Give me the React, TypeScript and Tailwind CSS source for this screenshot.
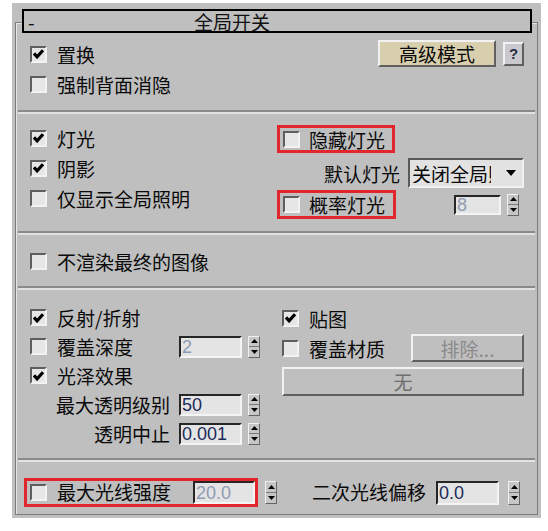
function Check({ checked }: { checked?: boolean }) {
  return (
    <span className="flex h-[17px] w-[17px] shrink-0 items-center justify-center border-2 border-t-[#5e5e5e] border-l-[#5e5e5e] border-b-[#f2f2f2] border-r-[#f2f2f2] bg-[#e6e6e6]">
      {checked && (
        <svg width="11" height="10" viewBox="0 0 11 10">
          <path d="M1 4.4 L4.1 7.8 L10 1.2" fill="none" stroke="#000" strokeWidth="3.2" />
        </svg>
      )}
    </span>
  );
}

function Spinner({ h = "h-[22px]" }: { h?: string }) {
  return (
    <span className={`flex ${h} w-[12px] shrink-0 flex-col border border-t-[#f0f0f0] border-l-[#f0f0f0] border-b-[#666] border-r-[#666] bg-[#c6c6c6]`}>
      <span className="flex flex-1 items-center justify-center border-b border-b-[#7a7a7a]">
        <svg width="7" height="4" viewBox="0 0 7 4">
          <path d="M0 4 L3.5 0 L7 4Z" fill="#000" />
        </svg>
      </span>
      <span className="flex flex-1 items-center justify-center">
        <svg width="7" height="4" viewBox="0 0 7 4">
          <path d="M0 0 L3.5 4 L7 0Z" fill="#000" />
        </svg>
      </span>
    </span>
  );
}

function Field({ value, dim, className }: { value: string; dim?: boolean; className: string }) {
  return (
    <span
      className={`flex shrink-0 items-center border-2 border-t-[#262626] border-l-[#262626] border-b-[#f4f4f4] border-r-[#f4f4f4] bg-[#e4e4e4] pl-[1px] font-['Liberation_Sans',sans-serif] text-[18px] leading-none ${
        dim ? "text-[#8f9bb3]" : "text-[#1c2a5a]"
      } ${className}`}
    >
      {value}
    </span>
  );
}

function Label({ text }: { text: string }) {
  return <span className="whitespace-nowrap text-[19px] leading-none text-[#0a0a0a]">{text}</span>;
}

function CheckRow({ checked, text }: { checked?: boolean; text: string }) {
  return (
    <div className="flex items-center gap-[10px]">
      <Check checked={checked} />
      <Label text={text} />
    </div>
  );
}

function Separator() {
  return <div className="mx-[2px] h-[4px] border-t-2 border-t-[#8a8a8a] border-b-2 border-b-[#e2e2e2]" />;
}

const raised =
  "flex items-center justify-center border-2 border-t-[#f2f2f2] border-l-[#f2f2f2] border-b-[#606060] border-r-[#606060]";

export default function App() {
  return (
    <div className="h-[531px] w-[548px] bg-white pl-[12px] pt-[3px] font-['Noto_Sans_CJK_SC','Liberation_Sans',sans-serif]">
      <div className="h-[515px] w-[529px] bg-[#bfbfbf] px-[3px] pt-[6px]">
        {/* Rollout title */}
        <div className="relative z-10 ml-[7px] flex h-[24px] w-[510px] items-center border-2 border-black bg-[#bfbfbf]">
          <span className="w-[170px] pl-[4px] text-[19px] leading-none text-[#111]">-</span>
          <span className="text-[19px] leading-none text-[#111]">全局开关</span>
        </div>

        <div className="-mt-[11px] h-[493px] w-[523px] border border-[#7c7c7c] pt-[10px] shadow-[inset_1px_1px_0_#e6e6e6]">
          {/* Displacement */}
          <div className="flex h-[77px] pl-[14px] pr-[13px] pt-[6px]">
            <div className="flex flex-col">
              <div className="flex h-[30px] items-center">
                <CheckRow checked text="置换" />
              </div>
              <div className="flex h-[30px] items-center">
                <CheckRow text="强制背面消隐" />
              </div>
            </div>
            <div className="ml-auto flex items-start gap-[7px] pt-[1px]">
              <span className={`${raised} h-[27px] w-[118px] bg-[#d8cfae]`}>
                <Label text="高级模式" />
              </span>
              <span className={`${raised} mt-[2px] h-[24px] w-[21px] bg-[#c9c9cd] font-['Liberation_Sans',sans-serif] text-[15px] font-bold text-[#2a2f45]`}>
                ?
              </span>
            </div>
          </div>

          <Separator />

          {/* Lights */}
          <div className="flex h-[117px] pl-[14px] pr-[13px]">
            <div className="flex flex-col pt-[9px]">
              <div className="flex h-[30px] items-center">
                <CheckRow checked text="灯光" />
              </div>
              <div className="flex h-[30px] items-center">
                <CheckRow checked text="阴影" />
              </div>
              <div className="flex h-[30px] items-center">
                <CheckRow text="仅显示全局照明" />
              </div>
            </div>
            <div className="ml-auto flex w-[247px] flex-col pt-[11px]">
              <div className="flex h-[28px] w-[118px] items-center gap-[9px] border-[3px] border-[#e3262b] pl-[3px]">
                <Check />
                <Label text="隐藏灯光" />
              </div>
              <div className="mt-[5px] flex h-[30px] items-center justify-end">
                <Label text="默认灯光" />
                <div className="ml-[8px] flex h-[30px] w-[116px] items-center border-2 border-t-[#5a5a5a] border-l-[#5a5a5a] border-b-[#f0f0f0] border-r-[#f0f0f0] bg-[#e2e2e2]">
                  <span className="w-[81px] overflow-hidden whitespace-nowrap pl-[2px] text-[19px] leading-none text-[#0a0a0a]">
                    关闭全局照明
                  </span>
                  <svg className="ml-[15px]" width="10" height="6" viewBox="0 0 10 6">
                    <path d="M0 0 L10 0 L5 6Z" fill="#000" />
                  </svg>
                </div>
              </div>
              <div className="mt-[2px] flex h-[29px] items-center">
                <div className="flex h-[29px] w-[119px] items-center gap-[9px] border-[3px] border-[#e3262b] pl-[3px]">
                  <Check />
                  <Label text="概率灯光" />
                </div>
                <Field value="8" dim className="ml-[58px] h-[20px] w-[47px]" />
                <span className="ml-[6px]">
                  <Spinner />
                </span>
              </div>
            </div>
          </div>

          <Separator />

          {/* Final image */}
          <div className="h-[51px] pl-[14px] pt-[11px]">
            <div className="flex h-[30px] items-center">
              <CheckRow text="不渲染最终的图像" />
            </div>
          </div>

          <Separator />

          {/* Materials */}
          <div className="flex h-[168px] pl-[14px] pr-[13px]">
            <div className="flex flex-col pt-[13px]">
              <div className="flex h-[29px] items-center">
                <CheckRow checked text="反射/折射" />
              </div>
              <div className="flex h-[29px] items-center">
                <div className="w-[149px]">
                  <CheckRow text="覆盖深度" />
                </div>
                <Field value="2" dim className="h-[22px] w-[63px]" />
                <span className="ml-[6px]">
                  <Spinner />
                </span>
              </div>
              <div className="flex h-[29px] items-center">
                <CheckRow checked text="光泽效果" />
              </div>
              <div className="flex h-[29px] items-center">
                <div className="flex w-[149px] justify-end pr-[9px]">
                  <Label text="最大透明级别" />
                </div>
                <Field value="50" className="h-[22px] w-[63px]" />
                <span className="ml-[6px]">
                  <Spinner />
                </span>
              </div>
              <div className="flex h-[29px] items-center">
                <div className="flex w-[149px] justify-end pr-[9px]">
                  <Label text="透明中止" />
                </div>
                <Field value="0.001" className="h-[22px] w-[63px]" />
                <span className="ml-[6px]">
                  <Spinner />
                </span>
              </div>
            </div>
            <div className="ml-auto flex w-[242px] flex-col pt-[13px]">
              <div className="flex h-[30px] items-center">
                <CheckRow checked text="贴图" />
              </div>
              <div className="flex h-[30px] items-center">
                <CheckRow text="覆盖材质" />
                <span className={`${raised} ml-auto h-[28px] w-[113px] bg-[#bfbfbf] text-[19px] leading-none text-[#8a8a8a]`}>
                  排除...
                </span>
              </div>
              <span className={`${raised} mt-[4px] h-[29px] w-full bg-[#bfbfbf] text-[19px] leading-none text-[#6e6e6e]`}>
                无
              </span>
            </div>
          </div>

          <Separator />

          {/* Ray intensity */}
          <div className="flex h-[51px] items-start pl-[8px] pr-[13px] pt-[16px]">
            <div className="flex h-[29px] items-center">
              <div className="flex h-[29px] w-[234px] items-center border-[3px] border-[#e3262b] pl-[3px]">
                <Check />
                <span className="ml-[10px]">
                  <Label text="最大光线强度" />
                </span>
                <Field value="20.0" dim className="ml-auto h-[23px] w-[62px]" />
              </div>
              <span className="ml-[7px]">
                <Spinner h="h-[23px]" />
              </span>
              <span className="ml-[35px]">
                <Label text="二次光线偏移" />
              </span>
              <Field value="0.0" className="ml-[10px] h-[24px] w-[63px]" />
              <span className="ml-[9px]">
                <Spinner h="h-[24px]" />
              </span>
            </div>
          </div>
        </div>
      </div>
    </div>
  );
}
